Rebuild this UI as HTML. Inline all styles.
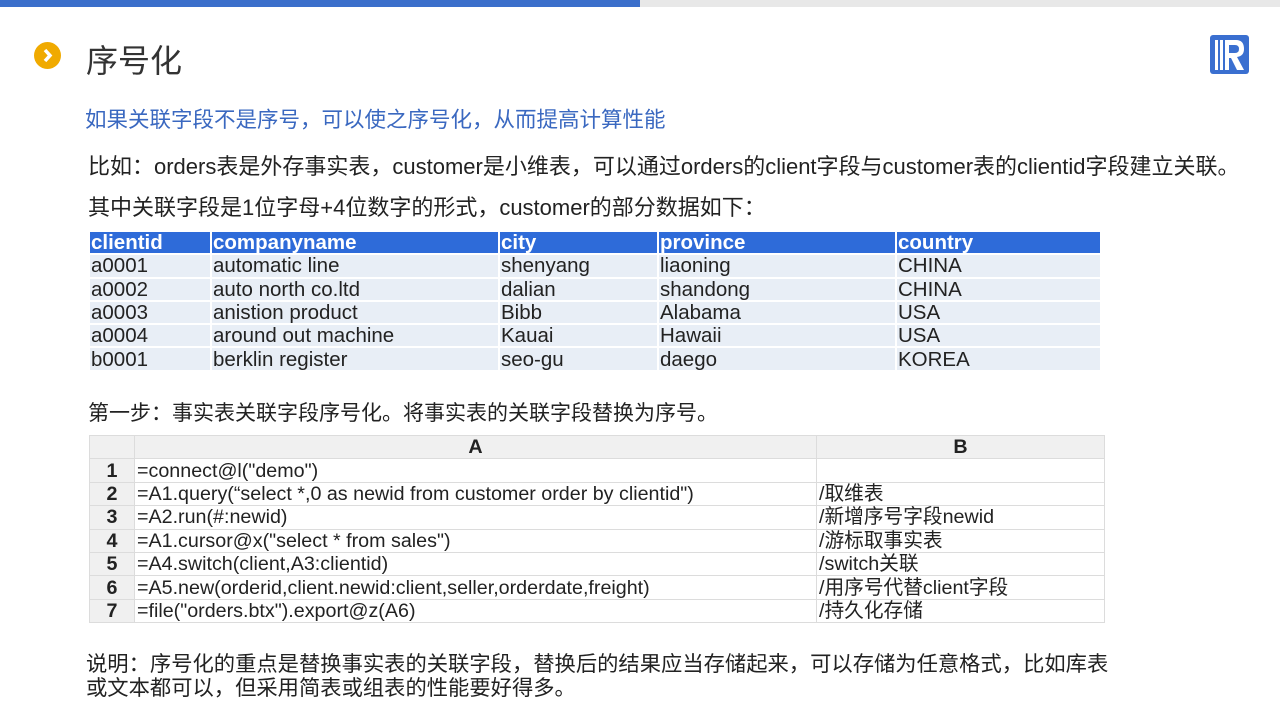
<!DOCTYPE html><html><head><meta charset="utf-8"><style>
body{margin:0;width:1280px;height:720px;background:#fff;position:relative;overflow:hidden;font-family:"Liberation Sans","Noto Sans CJK SC",sans-serif;color:#222}
.a{position:absolute;white-space:nowrap}
table{border-collapse:separate;position:absolute}
#t1{left:88px;top:230px;border-spacing:2px;font-size:20.5px}
#t1 td{background:#e8eef6;height:21.3px;padding:0 1px;line-height:21px}
#t1 tr.h td{background:#2e6bd9;color:#fff;font-weight:bold}
#t2{left:89px;top:435px;border-collapse:collapse;font-size:19.7px}
#t2 td{border:1px solid #dcdcdc;height:22.4px;padding:0 2px;line-height:22px}
#t2 td.n{background:#f0f0f0;text-align:center;font-weight:bold;width:40px}
#t2 tr.h td{background:#f0f0f0;text-align:center;font-weight:bold}
</style></head><body>
<div class="a" style="left:0;top:0;width:640px;height:7px;background:#3b6fcb"></div>
<div class="a" style="left:640px;top:0;width:640px;height:7px;background:#e8e8e8"></div>
<div class="a" style="left:34px;top:42px;width:27px;height:27px;border-radius:50%;background:#f0aa00"></div>
<svg class="a" style="left:34px;top:42px" width="27" height="27"><path d="M11 8 L16 13.5 L11 19" stroke="#fff" stroke-width="3.5" fill="none"/></svg>
<div class="a" style="left:86px;top:36px;font-size:32px;color:#333">序号化</div>
<svg class="a" style="left:1210px;top:35px" width="40" height="40"><rect width="39" height="39" rx="3" fill="#3a6fd0"/><rect x="5" y="5" width="3" height="30" fill="#fff"/><rect x="10" y="5" width="3" height="30" fill="#fff"/><path d="M15 5 H26 Q34 5 34 14 Q34 21 27 22 L34 35 H27 L21 23 H19 V35 H15 Z M19 10 V18 H25 Q29 18 29 14 Q29 10 25 10 Z" fill="#fff"/></svg>
<div class="a" style="left:85px;top:103px;font-size:21.5px;color:#3a68c0">如果关联字段不是序号，可以使之序号化，从而提高计算性能</div>
<div class="a" style="left:88px;top:149px;font-size:22px">比如：orders表是外存事实表，customer是小维表，可以通过orders的client字段与customer表的clientid字段建立关联。</div>
<div class="a" style="left:88px;top:190px;font-size:22px">其中关联字段是1位字母+4位数字的形式，customer的部分数据如下：</div>
<table id="t1">
<tr class="h"><td style="width:118px">clientid</td><td style="width:284px">companyname</td><td style="width:155px">city</td><td style="width:234px">province</td><td style="width:201px">country</td></tr>
<tr><td>a0001</td><td>automatic line</td><td>shenyang</td><td>liaoning</td><td>CHINA</td></tr>
<tr><td>a0002</td><td>auto north co.ltd</td><td>dalian</td><td>shandong</td><td>CHINA</td></tr>
<tr><td>a0003</td><td>anistion product</td><td>Bibb</td><td>Alabama</td><td>USA</td></tr>
<tr><td>a0004</td><td>around out machine</td><td>Kauai</td><td>Hawaii</td><td>USA</td></tr>
<tr><td>b0001</td><td>berklin register</td><td>seo-gu</td><td>daego</td><td>KOREA</td></tr>
</table>
<div class="a" style="left:88px;top:397px;font-size:21px">第一步：事实表关联字段序号化。将事实表的关联字段替换为序号。</div>
<table id="t2">
<tr class="h"><td class="n"></td><td style="width:677px">A</td><td style="width:283px">B</td></tr>
<tr><td class="n">1</td><td>=connect@l("demo")</td><td></td></tr>
<tr><td class="n">2</td><td>=A1.query(“select *,0 as newid from customer order by clientid")</td><td>/取维表</td></tr>
<tr><td class="n">3</td><td>=A2.run(#:newid)</td><td>/新增序号字段newid</td></tr>
<tr><td class="n">4</td><td>=A1.cursor@x("select * from sales")</td><td>/游标取事实表</td></tr>
<tr><td class="n">5</td><td>=A4.switch(client,A3:clientid)</td><td>/switch关联</td></tr>
<tr><td class="n">6</td><td>=A5.new(orderid,client.newid:client,seller,orderdate,freight)</td><td>/用序号代替client字段</td></tr>
<tr><td class="n">7</td><td>=file("orders.btx").export@z(A6)</td><td>/持久化存储</td></tr>
</table>
<div class="a" style="left:86px;top:652px;font-size:21.3px;line-height:24px">说明：序号化的重点是替换事实表的关联字段，替换后的结果应当存储起来，可以存储为任意格式，比如库表<br>或文本都可以，但采用简表或组表的性能要好得多。</div>
</body></html>
